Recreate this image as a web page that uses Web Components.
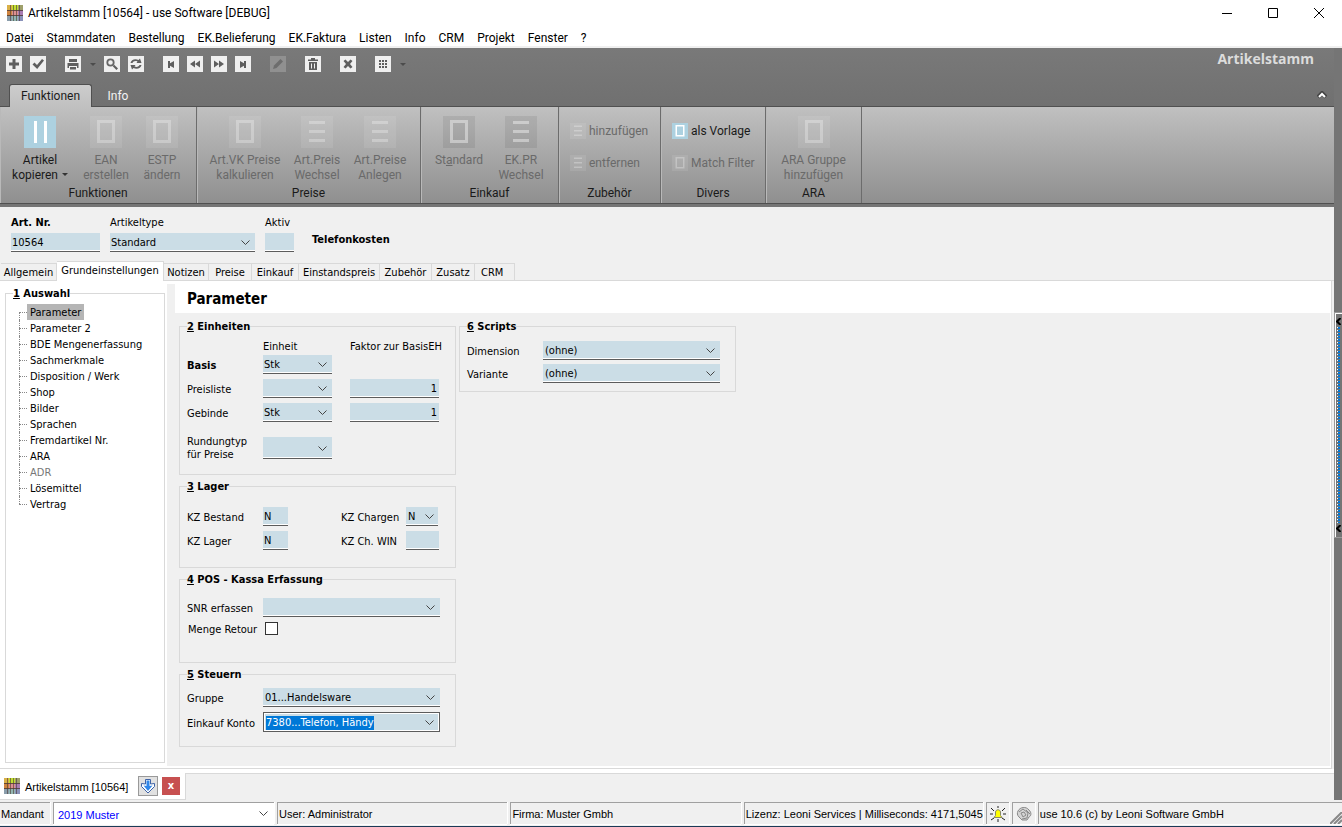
<!DOCTYPE html>
<html lang="de">
<head>
<meta charset="utf-8">
<title>Artikelstamm [10564] - use Software [DEBUG]</title>
<style>
html,body{margin:0;height:100%}
body{font:11px/14px "DejaVu Sans Condensed","DejaVu Sans",sans-serif;color:#000;background:#f0f0f0;--ui:Roboto,"Open Sans",sans-serif;--bar:"Liberation Sans",Arial,sans-serif}
</style>
</head>
<body>
<use-app></use-app>
<script>
function define(name, render, ready) {
  customElements.define(name, class extends HTMLElement {
    constructor() { super(); this.attachShadow({ mode: 'open' }); }
    connectedCallback() {
      const t = document.createElement('template');
      t.innerHTML = '<style>*{box-sizing:border-box}button,input,select{font:inherit;color:inherit;margin:0;border:0;border-radius:0;background:none;padding:0;outline:0}a{color:inherit;text-decoration:none}u{text-decoration-thickness:1px;text-underline-offset:1px}</style>' + render((n, d = '') => this.getAttribute(n) ?? d, this);
      this.shadowRoot.replaceChildren(t.content.cloneNode(true));
      if (ready) ready(this.shadowRoot, this);
    }
  });
}

define('use-logo', () => `<style>:host{display:block;width:16px;height:16px}svg{display:block}</style>
<svg width="16" height="16" viewBox="0 0 16 16"><path fill="#d9b048" d="M0 0h5v5H0z"/><path fill="#c2de32" d="M5 0h6v5H5z"/><path fill="#9fa06c" d="M11 0h5v5h-5z"/><path fill="#cf8440" d="M0 5h5v6H0z"/><path fill="#dd9090" d="M5 5h6v6H5z"/><path fill="#a97db4" d="M11 5h5v6h-5z"/><path fill="#8a9dab" d="M0 11h5v5H0z"/><path fill="#93b6b2" d="M5 11h6v5H5z"/><path fill="#8a92ba" d="M11 11h5v5h-5z"/><path stroke="#4a3a34" d="M0 5.500h16M0 10.500h16" opacity=".8"/><path stroke="#4a3a34" d="M3.500 0v16M6.500 0v16M9.500 0v16M12.500 0v16" opacity=".6"/></svg>`);

define('use-titlebar', () => `<style>
:host{display:flex;align-items:center;height:25px;background:#fff;font:12px/16px var(--ui);padding-left:7px}
h1{font:inherit;margin:0 auto 0 5px}button{width:46px;height:25px;display:grid;place-items:center}
svg{display:block;fill:none;stroke:#000}</style>
<use-logo></use-logo><h1>Artikelstamm [10564] - use Software [DEBUG]</h1>
<button aria-label="Minimieren"><svg width="10" height="10"><path d="M0 5.500h10"/></svg></button>
<button aria-label="Maximieren"><svg width="10" height="10"><path d="M.5.5h9v9h-9z"/></svg></button>
<button aria-label="Schließen"><svg width="10" height="10"><path d="M0 0l10 10M10 0L0 10"/></svg></button>`);

define('use-menubar', () => `<style>
:host{display:block;background:#fff;border-bottom:2px solid #f0f0f0;height:23px;font:12px/16px var(--ui)}
nav{display:flex;gap:13px;padding:5px 6px 0}</style>
<nav>${'Datei,Stammdaten,Bestellung,EK.Belieferung,EK.Faktura,Listen,Info,CRM,Projekt,Fenster,?'.split(',').map(t => `<a href="#">${t}</a>`).join('')}</nav>`);

const TOOLS = {
  plus: '<path d="M6.500 3h3v3.500H13v3H9.500V13h-3V9.500H3v-3h3.500z"/>',
  check: '<path d="M2.500 8.500l2-2L7 9l5-6 2 1.500L7.200 13z"/>',
  print: '<path d="M4 3h8v3H4zM2.500 7h11v5H12v-2H4v2H2.500zM5 11h6v2.500H5z"/>',
  find: '<path d="M8.800 10.200l1.400-1.400 3.800 3.600-1.600 1.600z"/><circle cx="6.500" cy="6.500" r="3.200" fill="none" stroke="#666" stroke-width="1.800"/>',
  sync: '<path d="M2.500 7C3 4 7 2 10.500 4L12 2.500 13.500 7H8.500l1-1.500C7 4.500 5 5.500 4.500 7zM13.500 9c-.5 3-4.500 5-8 3L4 13.500 2.500 9h5l-1 1.500c2.500 1 4.500 0 5-1.500z"/>',
  first: '<path d="M5 5h2v2.200L11 5v7L7 9.800V12H5z"/>',
  prev: '<path d="M8 4.500v7L3 8zM13 4.500v7L8 8z"/>',
  next: '<path d="M8 4.500v7L13 8zM3 4.500v7L8 8z"/>',
  last: '<path d="M11 5H9v2.200L5 5v7l4-2.200V12h2z"/>',
  edit: '<path d="M3 13l1-3.500L10.500 3l2.500 2.500L6.500 12z"/>',
  trash: '<path d="M3 3.500h3v-1.500h4v1.500h3V5H3zM4 6h8v8H4z"/><path d="M6.500 7.500v5M9.500 7.500v5" stroke="#efefef"/>',
  close: '<path d="M3.500 5l2-1.500L8 6l2.500-2.500 2 1.500L10 8l2.500 3-2 1.500L8 10l-2.500 2.500-2-1.500L6 8z"/>',
  grid: '<path d="M4 4h2v2H4zM7 4h2v2H7zM10 4h2v2h-2zM4 7h2v2H4zM7 7h2v2H7zM10 7h2v2h-2zM4 10h2v2H4zM7 10h2v2H7zM10 10h2v2h-2z"/>'
};
define('use-tool', a => `<style>:host{display:flex;align-items:center}
button{width:16px;height:16px;background:#efefef;display:block}:host([disabled]) button{background:#909090}
svg{display:block;fill:#5e5e5e}:host([disabled]) svg{fill:#6d6d6d}i{width:0;border:3px solid transparent;border-top-color:#4c4c4c;border-bottom:0;margin:1px 0 0 9px}</style>
<button aria-label="${a('icon')}"><svg width="16" height="16" viewBox="0 0 16 16">${TOOLS[a('icon')]}</svg></button>${a('menu') ? '<i></i>' : ''}`);

define('use-toolbar', () => `<style>
:host{display:flex;align-items:flex-start;padding:8px 20px 0 6px;height:36px}
div{display:flex;gap:8px;margin-right:19px}h2{margin:-6px 0 0 auto;font:bold 14px/18px "Open Sans",sans-serif;color:#dcdcdc}div.n{margin-right:8px}</style>
<div><use-tool icon="plus"></use-tool><use-tool icon="check"></use-tool></div>
<div class="n"><use-tool icon="print" menu="1"></use-tool></div>
<div><use-tool icon="find"></use-tool><use-tool icon="sync"></use-tool></div>
<div><use-tool icon="first"></use-tool><use-tool icon="prev"></use-tool><use-tool icon="next"></use-tool><use-tool icon="last"></use-tool></div>
<div><use-tool icon="edit" disabled></use-tool></div><div><use-tool icon="trash"></use-tool></div><div><use-tool icon="close"></use-tool></div>
<div><use-tool icon="grid" menu="1"></use-tool></div><h2>Artikelstamm</h2>`);

define('use-ribbon-tabs', () => `<style>
:host{display:flex;height:23px;padding:0 7px 0 9px;font:12px/24px var(--ui);color:#f4f4f4;border-bottom:1px solid #505050}
button{width:52px;height:22px}.on{width:83px;height:23px;line-height:22px;color:#1c1c1c;background:linear-gradient(#cdcdcd,#c0c0c0);border:1px solid #505050;border-bottom:0;border-radius:3px 3px 0 0}
.up{margin-left:auto;width:10px;display:grid;place-items:center}svg{display:block}</style>
<button class="on">Funktionen</button><button>Info</button>
<button class="up" aria-label="Menüband einklappen"><svg width="10" height="8"><path d="M1 6l4-4 4 4" fill="none" stroke="#444" stroke-width="4"/><path d="M2 6l3-3 3 3" fill="none" stroke="#fff" stroke-width="2"/></svg></button>`);

const GLYPH = {
  bars: '<path d="M10 5h3v22h-3zM20 5h3v22h-3z"/>',
  box: '<path fill-rule="evenodd" d="M7 4h18v23H7zm3 3v17h12V7z"/>',
  lines: '<path d="M8 5h16v3H8zM8 14h16v3H8zM8 23h16v3H8z"/>'
};
define('use-ribbon-button', (a, el) => `<style>
:host{display:block;flex:none;width:${a('w', '64')}px;color:#6a6a6a}:host([active]){color:#1a1a1a}:host([small]){width:auto}
button{display:flex;flex-direction:column;align-items:center;width:100%;white-space:nowrap;line-height:15px}
svg{display:block;width:32px;height:32px;background:rgba(255,255,255,.09);fill:rgba(255,255,255,.28);margin-bottom:5px}
:host([dark]) svg{background:rgba(0,0,0,.07);fill:rgba(255,255,255,.4)}:host([active]) svg{background:#add1e0;fill:#fff}
:host([small]) button{flex-direction:row;gap:3px;height:16px;text-align:left}:host([small]) svg{width:16px;height:16px;margin:0}
i{display:inline-block;border:3px solid transparent;border-top-color:#333;border-bottom:0;margin:0 0 3px 4px}</style>
<button><svg viewBox="0 0 32 32">${GLYPH[a('icon')]}</svg><span><slot></slot>${a('menu') ? '<i></i>' : ''}</span></button>`);

define('use-ribbon-group', a => `<style>
:host{display:flex;flex-direction:column;flex:none;width:${a('w')}px;height:96px;border-right:1px solid #6c6c6c;box-shadow:inset 1px 0 #b9b9b9}
div{display:flex;flex:1;padding:9px 0 0 ${a('pad', '6')}px}:host([stack]) div{flex-direction:column;gap:16px;padding-top:16px}
h3{font:inherit;color:#1a1a1a;text-align:center;margin:0;line-height:20px}</style><div><slot></slot></div><h3>${a('label')}</h3>`);

define('use-ribbon', () => `<style>
:host{display:flex;height:100px;background:linear-gradient(#c0c0c0,#8f8f8f 96px);border-bottom:3px solid #757575;box-shadow:inset 0 -1px #505050;font:12px/15px var(--ui)}</style>
<use-ribbon-group label="Funktionen" w="197" pad="8">
<use-ribbon-button icon="bars" active menu="1" w="64">Artikel<br>kopieren</use-ribbon-button><use-ribbon-button icon="box" w="68">EAN<br>erstellen</use-ribbon-button><use-ribbon-button icon="box" w="44">ESTP<br>ändern</use-ribbon-button></use-ribbon-group>
<use-ribbon-group label="Preise" w="224"><use-ribbon-button icon="box" w="84">Art.VK Preise<br>kalkulieren</use-ribbon-button><use-ribbon-button icon="lines" w="60">Art.Preis<br>Wechsel</use-ribbon-button><use-ribbon-button icon="lines" w="66">Art.Preise<br>Anlegen</use-ribbon-button></use-ribbon-group>
<use-ribbon-group label="Einkauf" w="138"><use-ribbon-button dark icon="box" w="64">St<u>a</u>ndard</use-ribbon-button><use-ribbon-button dark icon="lines" w="60">EK.PR<br>Wechsel</use-ribbon-button></use-ribbon-group>
<use-ribbon-group label="Zubehör" w="102" pad="11" stack><use-ribbon-button small icon="lines">hinzufügen</use-ribbon-button><use-ribbon-button small icon="lines">entfernen</use-ribbon-button></use-ribbon-group>
<use-ribbon-group label="Divers" w="105" pad="11" stack><use-ribbon-button small active icon="box">als Vorlage</use-ribbon-button><use-ribbon-button small icon="box">Match Filter</use-ribbon-button></use-ribbon-group>
<use-ribbon-group label="ARA" w="96" pad="0"><use-ribbon-button icon="box" w="95">ARA Gruppe<br>hinzufügen</use-ribbon-button></use-ribbon-group>`);

/* Labelled control: kind = select | text | combo | check; top puts the label above. */
define('use-field', a => {
  const kind = a('kind', 'select'), v = a('value'), name = a('label') || a('name');
  const ctl = kind === 'select' ? `<select id="c" aria-label="${name}"><option>${v}</option></select>`
    : kind === 'check' ? `<input id="c" type="checkbox">`
    : `<input id="c" type="text" aria-label="${name}" value="${v}"${kind === 'combo' ? ' role="combobox"' : ''}>`;
  const arrow = kind === 'select' || kind === 'combo' ? '<svg width="9" height="6"><path d="M.5.5l4 4 4-4" fill="none" stroke="#444"/></svg>' : '';
  return `<style>
:host{display:flex;align-items:center}
:host([top]){flex-direction:column;align-items:flex-start;gap:3px}
label{width:${a('lw', '76')}px;flex:none;line-height:13px;padding-top:2px}:host([bold]) label{font-weight:bold}
:host([top]) label{width:auto;padding:0;line-height:14px}:host([tall]) label{padding:0}
.b{display:grid;align-items:center;width:${a('w', '69')}px;height:${a('h', '19')}px;padding-top:2px;background:#cbdde6;border-bottom:1px solid #5c5c5c;box-shadow:inset 0 -1px #fff}
.b>*{grid-area:1/1}svg{justify-self:end;margin-right:${a('w') === '32' ? 4 : 5}px;pointer-events:none}
input[type=text],select{width:100%;min-width:0;height:14px;line-height:14px;padding:0 2px 0 1px;appearance:none;text-align:${a('align', 'left')}}
:host([inset]) select{padding-left:2px}
input[type=text]::selection{background:#0078d7;color:#fff}
:host([kind=check]) .b{background:none;border:0;box-shadow:none;padding:0 0 0 2px}
:host([kind=check]) label{padding-left:1px}
input[type=checkbox]{appearance:none;width:13px;height:13px;background:#fff;border:1px solid #333}
:host([kind=combo]) .b{border:1px solid #5c5c5c;box-shadow:inset 0 0 0 1px #fff;padding-top:1px}
:host([kind=combo]) input{padding-left:2px}</style>
${a('label') ? `<label for="c">${a('label').replace('|', '<br>')}</label>` : ''}<span class="b">${ctl}${arrow}</span>`;
}, (root, el) => {
  if (el.getAttribute('kind') === 'combo') { const i = root.querySelector('input'); i.focus({ preventScroll: true }); i.select(); }
});

define('use-header', () => `<style>
:host{display:flex;gap:10px;padding:9px 11px 0;height:54px}b{margin:17px 0 0 8px}</style>
<use-field top bold kind="text" label="Art. Nr." value="10564" w="89"></use-field>
<use-field top label="Artikeltype" value="Standard" w="145"></use-field>
<use-field top kind="text" label="Aktiv" w="29"></use-field><b>Telefonkosten</b>`);

define('use-tabs', () => `<style>
:host{display:flex;align-items:flex-end;height:20px;padding-left:1px;box-shadow:inset 0 -1px #d9d9d9}
button{height:18px;flex:none;border:solid #d9d9d9;border-width:1px 1px 1px 0;line-height:16px;padding-top:1px;white-space:nowrap}
button:first-child{border-left-width:1px}.on{height:20px;background:#fff;border-bottom:0;padding:0 0 2px}</style>
${[['Allgemein', 56], ['Grundeinstellungen', 107], ['Notizen', 45], ['Preise', 43], ['Einkauf', 47], ['Einstandspreis', 81], ['Zubehör', 52], ['Zusatz', 43], ['CRM', 40]].map(([t, w], i) => `<button class="${i === 1 ? 'on' : ''}" style="width:${w}px${i === 8 ? ';text-align:left;padding-left:6px' : ''}">${t}</button>`).join('')}`);

define('use-group', a => `<style>
:host{display:block}
fieldset{margin:0;border:1px solid #d9d9d9;padding:${a('pt', '5')}px 0 0 ${a('pl', '7')}px;height:100%;min-width:0;display:flex;flex-direction:column;gap:${a('gap', '5')}px}
legend{font-weight:bold;padding:2px 0 0;line-height:14px;margin-left:${a('ml', '0')}px}</style>
<fieldset><legend><u>${a('no')}</u> ${a('label')}</legend><slot></slot></fieldset>`);

define('use-tree', () => `<style>
:host{display:block}ul{list-style:none;margin:0;padding:0}
li{display:flex;align-items:center;height:16px;position:relative}
li::before{content:"";width:8px;border-top:1px dotted #888}
li::after{content:"";position:absolute;left:0;top:0;height:100%;border-left:1px dotted #888}
li:first-child::after{top:8px;height:8px}li:last-child::after{height:8px}
a{padding:2px 3px 0;line-height:14px}.on{background:#b5b5b5}.off{color:#777}</style>
<ul>${'Parameter,Parameter 2,BDE Mengenerfassung,Sachmerkmale,Disposition / Werk,Shop,Bilder,Sprachen,Fremdartikel Nr.,ARA,ADR,Lösemittel,Vertrag'.split(',').map(t => `<li><a href="#" class="${t === 'Parameter' ? 'on' : t === 'ADR' ? 'off' : ''}">${t}</a></li>`).join('')}</ul>`);

define('use-page', () => `<style>
:host{display:flex;flex:1;min-height:0;background:#fff;border:solid #d9d9d9;border-width:0 1px 1px 0;margin-right:2px;padding:0 1px 2px 0}
aside{width:167px;flex:none;padding:4px 2px 3px 5px}aside use-group{height:100%}
main{flex:1;background:#f0f0f0;margin-top:3px;min-width:0}
h2{margin:0 0 0 8px;background:#fff;font-size:15px;line-height:27px;padding:2px 0 0 12px}
.cols{display:flex;align-items:flex-start;gap:3px;padding:5px 12px 0}
.col{display:flex;flex-direction:column;gap:3px;width:277px}
.row{display:flex}.cap{gap:31px;padding:1px 0 0 76px;margin-bottom:-4px;white-space:nowrap}
.g2{height:157px}.g3{height:90px}.g4{height:92px}.g5{height:81px}.g6{height:74px}
.round{margin-top:8px}.f{margin-left:18px}.k{margin-left:53px}</style>
<aside><use-group no="1" label="Auswahl" pt="3" pl="13" ml="-6"><use-tree></use-tree></use-group></aside>
<main><h2>Parameter</h2><div class="cols"><div class="col">
<use-group class="g2" no="2" label="Einheiten">
<div class="row cap"><span style="width:56px">Einheit</span><span>Faktor zur BasisEH</span></div>
<use-field bold label="Basis" value="Stk"></use-field>
<div class="row"><use-field label="Preisliste"></use-field><use-field class="f" kind="text" name="Faktor Preisliste" value="1" align="right" w="89"></use-field></div>
<div class="row"><use-field label="Gebinde" value="Stk"></use-field><use-field class="f" kind="text" name="Faktor Gebinde" value="1" align="right" w="89"></use-field></div>
<use-field tall class="round" label="Rundungtyp|für Preise" h="22"></use-field></use-group>
<use-group class="g3" no="3" label="Lager" pt="13">
<div class="row"><use-field kind="text" label="KZ Bestand" value="N" w="25"></use-field><use-field class="k" label="KZ Chargen" lw="65" value="N" w="32" inset></use-field></div>
<div class="row"><use-field kind="text" label="KZ Lager" value="N" w="25"></use-field><use-field class="k" kind="text" label="KZ Ch. WIN" lw="65" w="33"></use-field></div></use-group>
<use-group class="g4" no="4" label="POS - Kassa Erfassung" pt="11" gap="2">
<use-field label="SNR erfassen" w="177"></use-field><use-field kind="check" label="Menge Retour" w="20"></use-field></use-group>
<use-group class="g5" no="5" label="Steuern" pt="6">
<use-field inset label="Gruppe" value="01...Handelsware" w="177"></use-field><use-field kind="combo" label="Einkauf Konto" value="7380...Telefon, Händy" w="177" h="20"></use-field></use-group>
</div><div class="col"><use-group class="g6" no="6" label="Scripts" pt="7" gap="4">
<use-field inset label="Dimension" value="(ohne)" w="177"></use-field><use-field inset label="Variante" value="(ohne)" w="177"></use-field></use-group></div></div></main>`);

define('use-taskbar', () => `<style>
:host{display:flex;height:31px;border-top:4px solid #fff}
div{display:flex;align-items:center;background:#fff;width:186px;padding:0 5px 0 4px;border:solid #d9d9d9;border-width:0 1px 1px 0}
span{margin:2px auto 0 5px;white-space:nowrap;font-family:var(--bar)}i{flex:1;border-top:1px solid #d9d9d9}
button{width:20px;height:20px;display:grid;place-items:center;border:1px solid #999;background:#e1e1e1}
.x{width:18px;height:18px;background:#c75050;border:0;margin-left:4px;color:#fff;font-weight:bold;line-height:14px}</style>
<div><use-logo></use-logo><span>Artikelstamm [10564]</span><button aria-label="Anheften"><svg width="16" height="16" viewBox="0 0 16 16"><path d="M5.500 1.500h5V6l4-.5v3L8 15 1.500 8.500v-3l4 .5z" fill="#fff" stroke="#3d62a6"/><path d="M6.500 2.500h3v5.500l3-.5L8 13 3.500 7.500l3 .5z" fill="#2f86ea"/></svg></button><button class="x">x</button></div><i></i>`);

define('use-dock', () => `<style>
:host{display:block;width:8px;flex:none;background:#757575;padding-top:264px}
button{display:flex;flex-direction:column;align-items:center;justify-content:space-between;width:8px;height:226px;border:solid #999;border-width:1px 0 1px 1px;background:#757575;padding:5px 0;box-shadow:inset 1px 1px #fff}
svg{display:block}i{width:4px;flex:1;margin:2px 0;background:repeating-linear-gradient(#fff 0 1px,transparent 1px 3px) 0 0/1px 3px repeat-y,repeating-linear-gradient(#0078d7 0 2px,transparent 2px 3px) 1px 0/2px 3px repeat-y}</style>
<button aria-label="Seitenleiste"><svg width="5" height="7"><path d="M4.500 0L1 3.500 4.500 7" fill="none" stroke="#000" stroke-width="2"/></svg><i></i><svg width="5" height="7"><path d="M4.500 0L1 3.500 4.500 7" fill="none" stroke="#000" stroke-width="2"/></svg></button>`);

define('use-statusbar', () => `<style>
:host{display:flex;gap:3px;height:27px;padding:2px 0 2px;border-bottom:1px solid #1c3a57;font-family:var(--bar)}
div{flex:none;border:solid #a0a0a0;border-width:1px 0 0 1px;box-shadow:1px 0 #fff,0 1px #fff;line-height:23px;padding-left:1px;white-space:nowrap}
.m{width:50px;border-left:0}.s{width:221px;color:#00f;background:#fff;display:grid;align-items:center}.s>*{grid-area:1/1}.s svg{justify-self:end;margin-right:6px;pointer-events:none}
select{appearance:none;width:100%;height:20px;padding-left:3px}
.u{flex:1 1 231px}.i{width:23px;display:grid;place-items:center;padding:0}.c{flex:1 1 305px;display:flex;justify-content:space-between}.c svg{align-self:end}
</style>
<div class="m"><label for="m">Mandant</label></div><div class="s"><select id="m"><option>2019 Muster</option></select><svg width="9" height="6"><path d="M.5.5l4 4 4-4" fill="none" stroke="#444"/></svg></div>
<div class="u">User: Administrator</div><div class="u">Firma: Muster Gmbh</div><div class="l">Lizenz: Leoni Services | Milliseconds: 4171,5045</div>
<div class="i"><svg width="16" height="16" viewBox="0 0 16 16"><path d="M1 2l3 3M15 2l-3 3M8 0v2M0 8h3M13 8h3M1 14l3-2M15 14l-3-2M8 13v3" stroke="#222"/><path d="M4 11.500l1.500-2V6C6 3 10 3 10.500 6v3.500l1.500 2z" fill="#ff0" stroke="#886"/></svg></div>
<div class="i"><svg width="16" height="16" viewBox="0 0 16 16" fill="#d4d4d4" stroke="#888"><path d="M2 5c2-4 8-5 11-1 3 3 2 6 0 7l-2 3H6l-3-3C1 9 1 7 2 5z"/><path d="M3 6l4-3 5 4-1 5-5 1M5 7l3-1 2 3-3 2zM10 4l4 4" fill="none"/></svg></div>
<div class="c"><span>use 10.6 (c) by Leoni Software GmbH</span><svg width="12" height="12"><path d="M0 12L12 0M4 12l8-8M8 12l4-4" stroke="#888" stroke-width="2"/></svg></div>`);

define('use-app', () => `<style>
:host{display:flex;flex-direction:column;min-height:100vh}
.body{display:flex;flex:1;min-height:0}.main{display:flex;flex-direction:column;flex:1;min-width:0}
.top{background:linear-gradient(#797979,#707070)}</style>
<use-titlebar></use-titlebar><use-menubar></use-menubar>
<div class="body"><div class="main"><div class="top"><use-toolbar></use-toolbar><use-ribbon-tabs></use-ribbon-tabs></div><use-ribbon></use-ribbon>
<use-header></use-header><use-tabs></use-tabs><use-page></use-page><use-taskbar></use-taskbar></div><use-dock></use-dock></div>
<use-statusbar></use-statusbar>`);
</script>
</body>
</html>
